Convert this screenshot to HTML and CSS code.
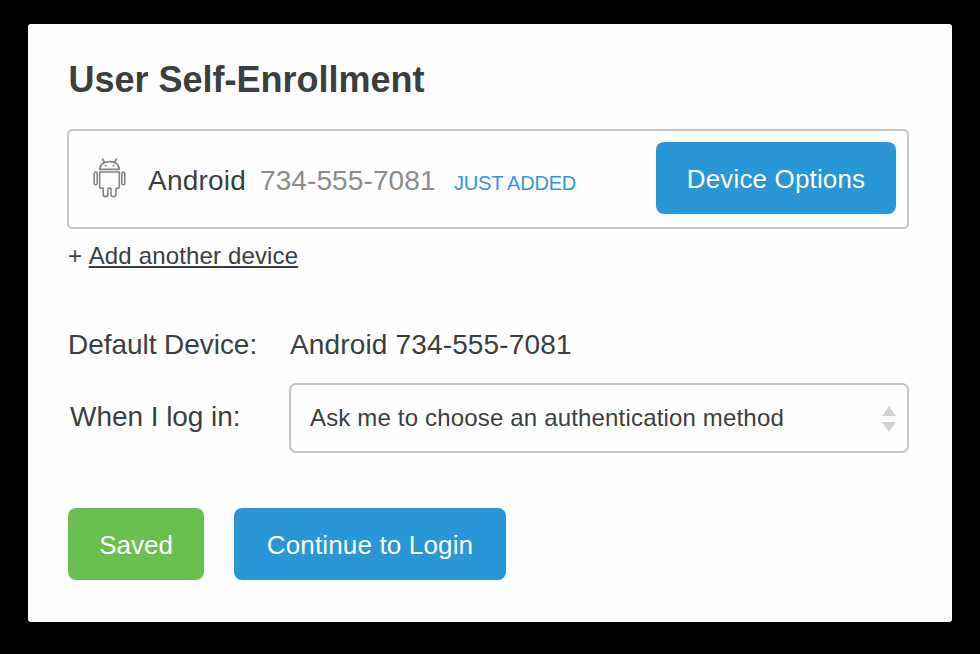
FILE: index.html
```html
<!DOCTYPE html>
<html lang="en">
<head>
<meta charset="utf-8">
<title>User Self-Enrollment</title>
<link rel="stylesheet" href="styles.css">
</head>
<body>
<main class="card">
  <h1 class="title">User Self-Enrollment</h1>
  <section class="device">
    <svg class="device-icon" width="34" height="42" viewBox="0 0 34 42" fill="none" stroke="#858585" stroke-width="1.6" stroke-linejoin="round" stroke-linecap="round">
      <path d="M6.8 12.4C7 7.6 10.4 4.6 16.5 4.6S26 7.6 26.2 12.4Z"/>
      <path d="M9.6 2l1.7 3M23.4 2l-1.7 3"/>
      <path d="M12.4 8.7h.2M20.4 8.7h.2" stroke-width="1.8"/>
      <path d="M6.7 15H26.3V29.4Q26.3 31.2 24.5 31.2H22.9V37.2Q22.9 39.6 20.4 39.6T18 37.2V31.2H15V37.2Q15 39.6 12.6 39.6T10.2 37.2V31.2H8.5Q6.7 31.2 6.7 29.4Z"/>
      <rect x="1.2" y="15" width="3" height="12.7" rx="1.5"/>
      <rect x="28.8" y="15" width="3" height="12.7" rx="1.5"/>
    </svg>
    <span class="device-name">Android</span>
    <span class="device-number">734-555-7081</span>
    <span class="device-status">JUST ADDED</span>
    <button class="button button-options" type="button">Device Options</button>
  </section>
  <p class="add">+ <a class="add-link" href="#">Add another device</a></p>
  <div class="row row-default">
    <span class="label">Default Device:</span>
    <span class="value">Android 734-555-7081</span>
  </div>
  <div class="row row-login">
    <span class="label label-login">When I log in:</span>
    <div class="select">
      <span>Ask me to choose an authentication method</span>
      <svg class="select-arrows" width="14" height="26" viewBox="0 0 14 26" fill="#d2d2d2"><path d="M7 0l7 10H0zM0 16h14L7 26z"/></svg>
    </div>
  </div>
  <div class="actions">
    <button class="button button-saved" type="button">Saved</button>
    <button class="button button-continue" type="button">Continue to Login</button>
  </div>
</main>
</body>
</html>
```
FILE: styles.css
```css
* {
  box-sizing: border-box;
}

body {
  margin: 0;
  padding: 24px 28px;
  background: #000;
  color: #3b3f40;
  font-family: "Liberation Sans", Arial, sans-serif;
  font-size: 28px;
}

.card {
  height: 598px;
  padding: 36px 43px 0 39px;
  border-radius: 3px;
  background: #fefefe;
}

.title {
  margin: 0 0 29px 1.5px;
  font-size: 36px;
  line-height: 40px;
}

.device {
  display: flex;
  align-items: center;
  height: 100px;
  padding: 0 11px 2px 24px;
  border: 2px solid #c5c6c6;
  border-radius: 5px;
}

.device-icon {
  flex: none;
  margin-right: 21px;
}

.device-name,
.device-number,
.device-status {
  padding-top: 6px;
  line-height: 36px;
  white-space: nowrap;
}

.device-name {
  width: 112px;
  letter-spacing: 0.2px;
}

.device-number {
  width: 194px;
  color: #8d8d8d;
  letter-spacing: 0.1px;
}

.device-status {
  padding-top: 10px;
  color: #3496d5;
  font-size: 20px;
  letter-spacing: -0.2px;
}

.button {
  height: 72px;
  padding: 2px 0 0;
  border: 0;
  border-radius: 8px;
  background: #2996d5;
  color: #fff;
  font: 26px "Liberation Sans", Arial, sans-serif;
  letter-spacing: 0.15px;
}

.button-options {
  width: 240px;
  margin-left: auto;
}

.add {
  margin: 12px 0 0 1px;
  font-size: 24px;
  line-height: 30px;
}

.add-link {
  color: inherit;
  letter-spacing: 0.15px;
  text-decoration-thickness: 2px;
  text-underline-offset: 2px;
  text-decoration-skip-ink: none;
}

.row {
  display: grid;
  grid-template-columns: 222px 1fr;
  align-items: center;
}

.row-default {
  height: 40px;
  margin-top: 54px;
}

.label {
  padding-left: 1px;
  letter-spacing: -0.05px;
}

.label-login {
  padding: 0 0 2px 3px;
}

.value {
  padding-left: 1px;
  letter-spacing: 0.15px;
}

.row-login {
  margin-top: 18px;
}

.select {
  display: flex;
  align-items: center;
  justify-content: space-between;
  height: 70px;
  padding: 0 11px 0 19px;
  border: 2px solid #c5c6c6;
  border-radius: 7px;
  font-size: 24px;
  letter-spacing: 0.17px;
}

.select-arrows {
  margin-top: 2px;
}

.actions {
  display: flex;
  gap: 30px;
  margin: 55px 0 0 1px;
}

.button-saved {
  width: 136px;
  background: #6abf4e;
  letter-spacing: 0;
}

.button-continue {
  width: 272px;
}
```
